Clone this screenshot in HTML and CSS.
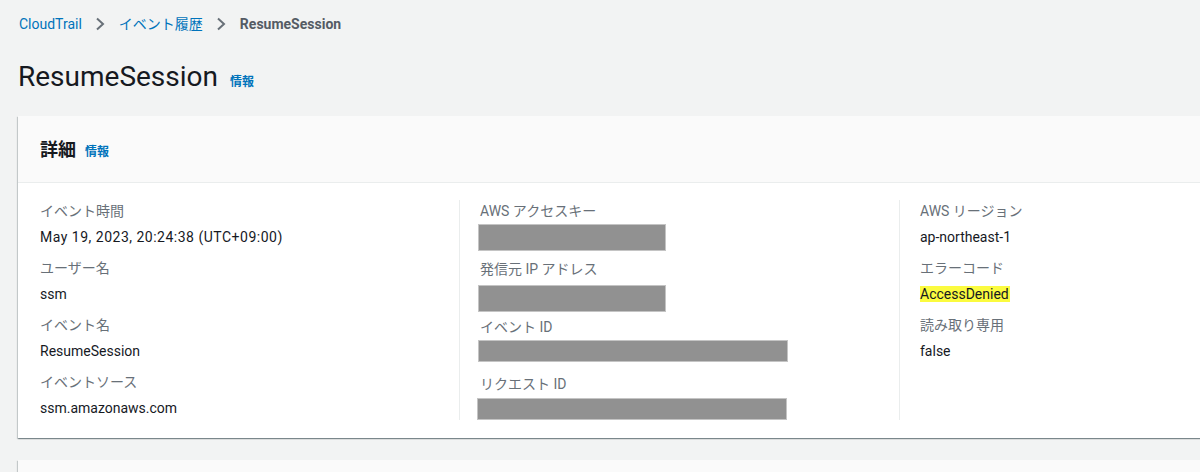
FILE: index.html
```html
<!DOCTYPE html>
<html lang="ja">
<head>
<meta charset="utf-8">
<title>ResumeSession</title>
<link rel="stylesheet" href="styles.css">
</head>
<body>
<div class="page">
  <nav class="crumbs">
    <a class="crumb-link" href="#">CloudTrail</a>
    <svg class="chev" width="10" height="14" viewBox="0 0 10 14"><path d="M2 1.5 L8 7 L2 12.5" fill="none" stroke="#687078" stroke-width="2"/></svg>
    <a class="crumb-link" href="#">イベント履歴</a>
    <svg class="chev" width="10" height="14" viewBox="0 0 10 14"><path d="M2 1.5 L8 7 L2 12.5" fill="none" stroke="#687078" stroke-width="2"/></svg>
    <span class="crumb-current">ResumeSession</span>
  </nav>

  <header class="page-head">
    <h1 class="page-title">ResumeSession</h1>
    <a class="info" href="#">情報</a>
  </header>

  <section class="card">
    <div class="card-head">
      <h2 class="card-title">詳細</h2>
      <a class="info" href="#">情報</a>
    </div>
    <div class="card-body">
      <div class="col">
        <div class="field"><div class="label">イベント時間</div><div class="value date">May 19, 2023, 20:24:38 (UTC+09:00)</div></div>
        <div class="field"><div class="label">ユーザー名</div><div class="value">ssm</div></div>
        <div class="field"><div class="label">イベント名</div><div class="value">ResumeSession</div></div>
        <div class="field"><div class="label">イベントソース</div><div class="value">ssm.amazonaws.com</div></div>
      </div>
      <div class="col col-div">
        <div class="field r1"><div class="label">AWS アクセスキー</div><div class="redact short"></div></div>
        <div class="field r2"><div class="label">発信元 IP アドレス</div><div class="redact short"></div></div>
        <div class="field r3"><div class="label">イベント ID</div><div class="redact long"></div></div>
        <div class="field r4"><div class="label">リクエスト ID</div><div class="redact long"></div></div>
      </div>
      <div class="col col-div">
        <div class="field"><div class="label">AWS リージョン</div><div class="value">ap-northeast-1</div></div>
        <div class="field"><div class="label">エラーコード</div><div class="value"><span class="hl">AccessDenied</span></div></div>
        <div class="field"><div class="label">読み取り専用</div><div class="value">false</div></div>
      </div>
    </div>
  </section>

  <section class="card card-next"></section>
</div>
</body>
</html>
```

FILE: styles.css
```css
* { box-sizing: border-box; }
html, body { margin: 0; padding: 0; }
body {
  background: #f2f3f3;
  font-family: Roboto, "Noto Sans CJK JP", sans-serif;
  color: #16191f;
  font-size: 14px;
  overflow: hidden;
  width: 1200px;
  height: 472px;
}
a { text-decoration: none; }
.page { padding: 14px 0 0 18px; width: 1500px; }

.crumbs {
  display: flex;
  align-items: center;
  height: 20px;
  padding-left: 1px;
  line-height: 20px;
}
.crumb-link { color: #0073bb; }
.chev { margin: 0 14px 0 13px; }
.crumb-current { color: #545b64; font-weight: bold; }

.page-head {
  display: flex;
  align-items: baseline;
  margin-top: 25px;
  height: 36px;
}
.page-title {
  margin: 0;
  font-size: 28px;
  font-weight: 400;
  line-height: 36px;
}
.page-head .info { margin-left: 12px; }
.info { color: #0073bb; font-size: 12px; font-weight: bold; }

.card {
  margin-top: 21px;
  background: #fff;
  width: 1400px;
  box-shadow: 0 1px 1px 0 rgba(0,28,36,.3), 1px 1px 1px 0 rgba(0,28,36,.15), -1px 1px 1px 0 rgba(0,28,36,.15);
}
.card-head {
  display: flex;
  align-items: baseline;
  background: #fafafa;
  height: 67px;
  padding: 21px 22px 0;
  border-bottom: 1px solid #eaeded;
}
.card-title { margin: 0; font-size: 18px; font-weight: bold; line-height: 26px; }
.card-head .info { margin-left: 9px; }

.card-body {
  display: grid;
  grid-template-columns: 419px 440px 440px;
  padding: 17px 22px 18px;
}
.col-div { border-left: 1px solid #eaeded; padding-left: 20px; }

.field { margin-bottom: 9px; }
.field:last-child { margin-bottom: 0; }
.label { color: #687078; line-height: 22px; }
.value { line-height: 22px; margin-top: 4px; }
.date { letter-spacing: 0.5px; }
.hl { background: #fbfb3f; padding: 0 1px 0 0; }

.redact { background: #919191; border: 1px solid #c4c4c4; }
.short { width: 188px; }
.long { width: 310px; }
.r1 .redact { margin-top: 2px; height: 27px; margin-left: -2px; }
.r1 { margin-bottom: 7px; }
.r2 .redact { margin-top: 5px; height: 27px; margin-left: -2px; }
.r2 { margin-bottom: 4px; }
.r3 .redact { margin-top: 2px; height: 22px; margin-left: -2px; }
.r3 { margin-bottom: 11px; }
.r4 .redact { margin-top: 3px; height: 22px; margin-left: -3px; }

.card-next {
  margin-top: 22px;
  height: 40px;
  background: #fafafa;
}
```
